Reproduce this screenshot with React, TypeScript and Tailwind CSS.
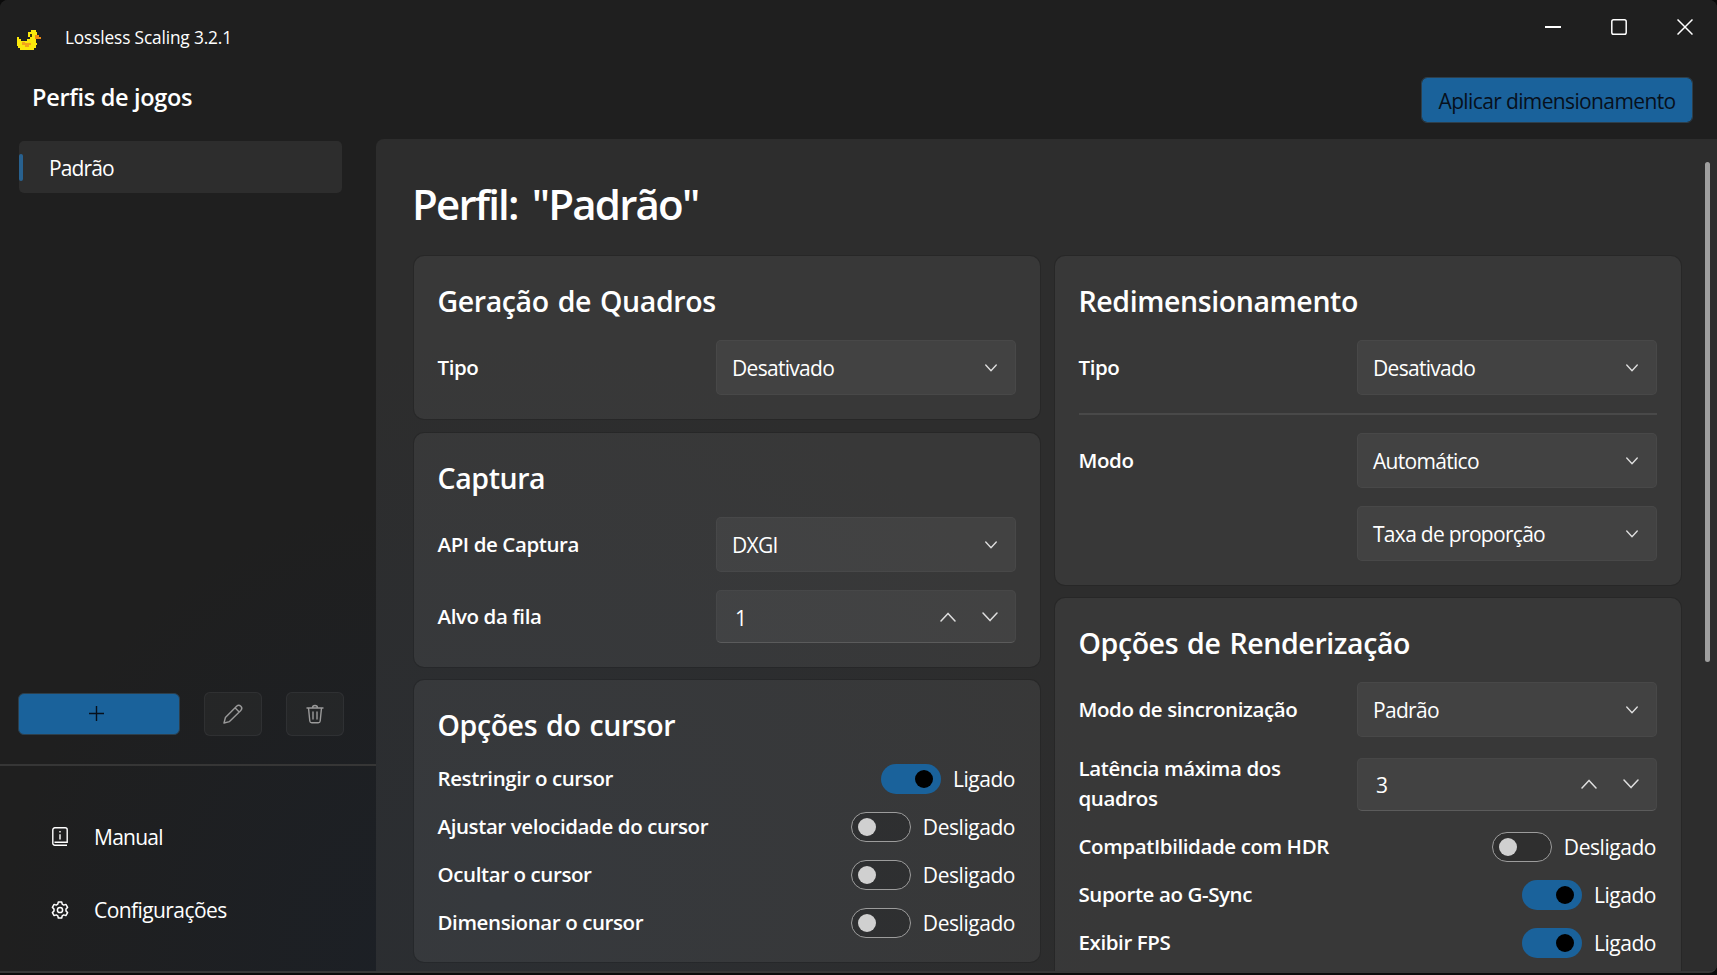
import React from "react";

function Duck() {
  return (
    <svg width="25" height="20" viewBox="0 0 25 20" shapeRendering="crispEdges" aria-hidden="true">
      <path fill="#fbe80c" d="M14 0h5v2h1v7h-1v4h1v2h-1v3h-2v2H3v-2H1v-2H0V7h2v2h2v2h6V9h3V7h-2V2h3z" />
      <path fill="#f2a51a" d="M5 12h3v1h6v2h-2v2H8v-2H5z" />
      <path fill="#f08c12" d="M18 5h4v2h2v2h-6z" />
      <path fill="#3c340c" d="M13 4h2v3h-2z" />
    </svg>
  );
}

function Chevron({ up = false, big = false }: { up?: boolean; big?: boolean }) {
  return (
    <svg width={big ? 16 : 12} height={big ? 10 : 8} viewBox="0 0 16 10" fill="none" stroke="#dedede" strokeWidth={big ? 1.5 : 1.8} strokeLinecap="round" strokeLinejoin="round">
      <path d={up ? "M1 9l7-7.6L15 9" : "M1 1l7 7.6L15 1"} />
    </svg>
  );
}

function Select({ children }: { children: string }) {
  return (
    <div className="flex h-[55px] w-[300px] items-center justify-between rounded-[5px] border border-white/[0.03] bg-white/[0.055] pr-[18px] pl-[15px]">
      <span className="pt-[3px] text-[21px] tracking-[-0.7px]">{children}</span>
      <Chevron />
    </div>
  );
}

function NumberBox({ value }: { value: string }) {
  return (
    <div className="flex h-[53px] w-[300px] items-center rounded-[5px] border border-white/[0.03] border-b-white/[0.13] bg-white/[0.055] pr-[17px] pl-[18px]">
      <span className="flex-1 pt-[4px] text-[21px]">{value}</span>
      <Chevron up big />
      <span className="w-[26px]" />
      <Chevron big />
    </div>
  );
}

function Label({ children }: { children: React.ReactNode }) {
  return <span className="-mt-[2px] text-[20.5px] leading-[30px] font-semibold tracking-[-0.4px] whitespace-nowrap">{children}</span>;
}

function ToggleRow({ label, on = false }: { label: string; on?: boolean }) {
  return (
    <div className="flex h-12 items-center justify-between">
      <Label>{label}</Label>
      <div className="flex items-center gap-3">
        {on ? (
          <span className="flex h-[30px] w-[60px] items-center justify-end rounded-full bg-[#1a629b] pr-2">
            <span className="size-[18px] rounded-full bg-black" />
          </span>
        ) : (
          <span className="flex h-[30px] w-[60px] items-center rounded-full border-[1.5px] border-[#9c9c9c] bg-black/15 pl-[6px]">
            <span className="size-[18px] rounded-full bg-[#d0d0d0]" />
          </span>
        )}
        <span className="pt-[2px] pr-px text-[21px] tracking-[-0.45px]">{on ? "Ligado" : "Desligado"}</span>
      </div>
    </div>
  );
}

function Card({ title, className, children }: { title: string; className: string; children: React.ReactNode }) {
  return (
    <section className={`rounded-[10px] bg-white/[0.055] pr-6 pl-[23.5px] shadow-[0_0_0_1px_rgba(0,0,0,0.12)] ${className}`}>
      <h2 className="pt-[25px] text-[28.5px] leading-[40px] font-semibold tracking-[-0.4px] whitespace-nowrap [word-spacing:2px]">{title}</h2>
      {children}
    </section>
  );
}

export default function App() {
  return (
    <div className="flex h-[975px] w-[1717px] flex-col overflow-hidden bg-[#0b0b0b] font-['Open_Sans','Noto_Sans',sans-serif] text-white">
      <div className="flex h-[973px] flex-col overflow-hidden rounded-t-[8px] rounded-br-[8px] border-b-2 border-[#373737] bg-[#1f1f1f] bg-[radial-gradient(ellipse_420px_460px_at_420px_960px,#1c2026,#1f1f1f)]">
        <header className="flex h-[139px] shrink-0 justify-between">
          <div className="flex flex-col">
            <div className="flex h-[75px] items-center pl-[17px]">
              <span className="pt-[5px]"><Duck /></span>
              <span className="pt-px pl-[23px] text-[17.3px] tracking-[-0.15px]">Lossless Scaling 3.2.1</span>
            </div>
            <h1 className="pl-8 text-[23.5px] leading-[44px] font-semibold tracking-[-0.3px]">Perfis de jogos</h1>
          </div>
          <div className="flex flex-col items-end">
            <div className="flex h-[54px] items-center gap-[50px] pr-[24px]">
              <svg width="16" height="16" stroke="#fff" strokeWidth="2"><path d="M0 8h16" /></svg>
              <svg width="16" height="16" fill="none" stroke="#fff" strokeWidth="1.5"><rect x="0.8" y="0.8" width="14.4" height="14.4" rx="1.8" /></svg>
              <svg width="16" height="16" stroke="#fff" strokeWidth="1.5"><path d="M0.5 0.5l15 15M15.5 0.5l-15 15" /></svg>
            </div>
            <button className="mt-[23px] mr-6 h-[46px] w-[272px] rounded-[6px] border-[1.5px] border-[#2d3f4c] bg-[#1a629b] bg-clip-padding pt-[3px] text-[21px] tracking-[-0.63px] whitespace-nowrap text-[#07101c]">
              Aplicar dimensionamento
            </button>
          </div>
        </header>
        <div className="flex min-h-0 flex-1">
          <aside className="flex w-[376px] shrink-0 flex-col">
            <div className="mt-[2px] ml-[19px] flex h-[52px] w-[323px] items-center rounded-[5px] bg-[#2d2d2d]">
              <span className="h-[27px] w-1 rounded-full bg-[#28618f]" />
              <span className="pt-[4px] pl-[26px] text-[21px] tracking-[-0.9px]">Padrão</span>
            </div>
            <div className="mt-[499px] flex items-center pl-[18px]">
              <button className="flex h-[42px] w-[162px] items-center justify-center rounded-[6px] border-[1.5px] border-[#2d3f4c] bg-[#1a629b] pr-[5px] pb-[2px]">
                <svg width="15" height="15" stroke="#07101c" strokeWidth="1.4"><path d="M7.5 0v15M0 7.5h15" /></svg>
              </button>
              <button className="ml-6 flex h-[44px] w-[58px] items-center justify-center rounded-[6px] border-[1.5px] border-white/[0.05] bg-white/[0.03]">
                <svg width="20" height="20" viewBox="0 0 20 20" fill="none" stroke="#9a9a9a" strokeWidth="1.4" strokeLinejoin="round">
                  <path d="M1 19l1.4-5.5L13.6 2.200a2.900 2.900 0 0 1 4.200 4.200L6.500 17.600zM12 3.800l4.200 4.200" />
                </svg>
              </button>
              <button className="ml-6 flex h-[44px] w-[58px] items-center justify-center rounded-[6px] border-[1.5px] border-white/[0.05] bg-white/[0.03]">
                <svg width="18" height="20" viewBox="0 0 18 20" fill="none" stroke="#9a9a9a" strokeWidth="1.4" strokeLinecap="round" strokeLinejoin="round">
                  <path d="M1 4h16M6.500 4a2.500 2.500 0 0 1 5 0M2.500 4l1.300 13a2 2 0 0 0 2 1.800h6.400a2 2 0 0 0 2-1.800L15.500 4M7 8v7M11 8v7" />
                </svg>
              </button>
            </div>
            <div className="mt-[28px] h-[2px] shrink-0 bg-[#363636]" />
            <div className="mt-[35px] flex h-[73px] items-center pl-[52px]">
              <svg className="-mt-[2px]" width="16" height="19" viewBox="0 0 16 19" fill="none" stroke="#fff" strokeWidth="1.4">
                <path d="M15 18.200H2.800A2 2 0 0 1 .8 16V2.800a2 2 0 0 1 2-2h10.400a2 2 0 0 1 2 2v12.500H2.500M8 7.200v5.200M8 4v1.500" />
              </svg>
              <span className="pt-px pl-[26px] text-[21px] tracking-[-0.75px]">Manual</span>
            </div>
            <div className="flex h-[73px] items-center pl-[51px]">
              <svg className="-mt-[2px]" width="18" height="18" viewBox="0 0 18 18" fill="none" stroke="#fff" strokeWidth="1.5" strokeLinejoin="round">
                <path d="M7.300 1h3.400l.5 2.200 1.500.9 2.200-.7 1.700 3L15 8v2l1.600 1.600-1.700 3-2.200-.7-1.500.9-.5 2.200H7.300l-.5-2.200-1.500-.9-2.200.7-1.700-3L3 10V8L1.400 6.400l1.700-3 2.200.7 1.500-.9z" />
                <circle cx="9" cy="9" r="2.600" />
              </svg>
              <span className="pt-px pl-[25px] text-[21px] tracking-[-0.58px]">Configurações</span>
            </div>
          </aside>
          <main className="relative min-w-0 flex-1 overflow-hidden rounded-tl-[8px] bg-[#2d2d2d] bg-[radial-gradient(ellipse_620px_560px_at_120px_760px,#2b2e32,#2d2d2d)] pl-[38px]">
            <h1 className="-ml-[2px] pt-[33px] text-[42px] leading-[64px] font-semibold tracking-[-1.8px] whitespace-nowrap [word-spacing:5px]">Perfil: "Padrão"</h1>
            <div className="mt-[20px] flex gap-[15px]">
              <div className="flex w-[626px] flex-col gap-[14px]">
                <Card title="Geração de Quadros" className="h-[163px]">
                  <div className="mt-[19px] flex items-center justify-between"><Label>Tipo</Label><Select>Desativado</Select></div>
                </Card>
                <Card title="Captura" className="h-[234px]">
                  <div className="mt-[19px] flex items-center justify-between"><Label>API de Captura</Label><Select>DXGI</Select></div>
                  <div className="mt-[18px] flex items-center justify-between"><Label>Alvo da fila</Label><NumberBox value="1" /></div>
                </Card>
                <Card title="Opções do cursor" className="-mt-px h-[282px]">
                  <div className="mt-[10px]">
                    <ToggleRow label="Restringir o cursor" on />
                    <ToggleRow label="Ajustar velocidade do cursor" />
                    <ToggleRow label="Ocultar o cursor" />
                    <ToggleRow label="Dimensionar o cursor" />
                  </div>
                </Card>
              </div>
              <div className="flex w-[626px] flex-col gap-[13px]">
                <Card title="Redimensionamento" className="h-[329px]">
                  <div className="mt-[19px] flex items-center justify-between"><Label>Tipo</Label><Select>Desativado</Select></div>
                  <div className="mt-[18px] h-[2px] bg-white/[0.09]" />
                  <div className="mt-[18px] flex items-center justify-between"><Label>Modo</Label><Select>Automático</Select></div>
                  <div className="mt-[18px] flex justify-end"><Select>Taxa de proporção</Select></div>
                </Card>
                <Card title="Opções de Renderização" className="h-[400px]">
                  <div className="mt-[19px] flex items-center justify-between"><Label>Modo de sincronização</Label><Select>Padrão</Select></div>
                  <div className="mt-[18px] flex items-center justify-between"><Label>Latência máxima dos<br />quadros</Label><NumberBox value="3" /></div>
                  <div className="mt-[10px]">
                    <ToggleRow label="CompatIbilidade com HDR" />
                    <ToggleRow label="Suporte ao G-Sync" on />
                    <ToggleRow label="Exibir FPS" on />
                  </div>
                </Card>
              </div>
            </div>
            <div className="absolute top-[23px] right-[7px] h-[500px] w-[5px] rounded-full bg-[#9f9f9f]" />
          </main>
        </div>
      </div>
    </div>
  );
}
